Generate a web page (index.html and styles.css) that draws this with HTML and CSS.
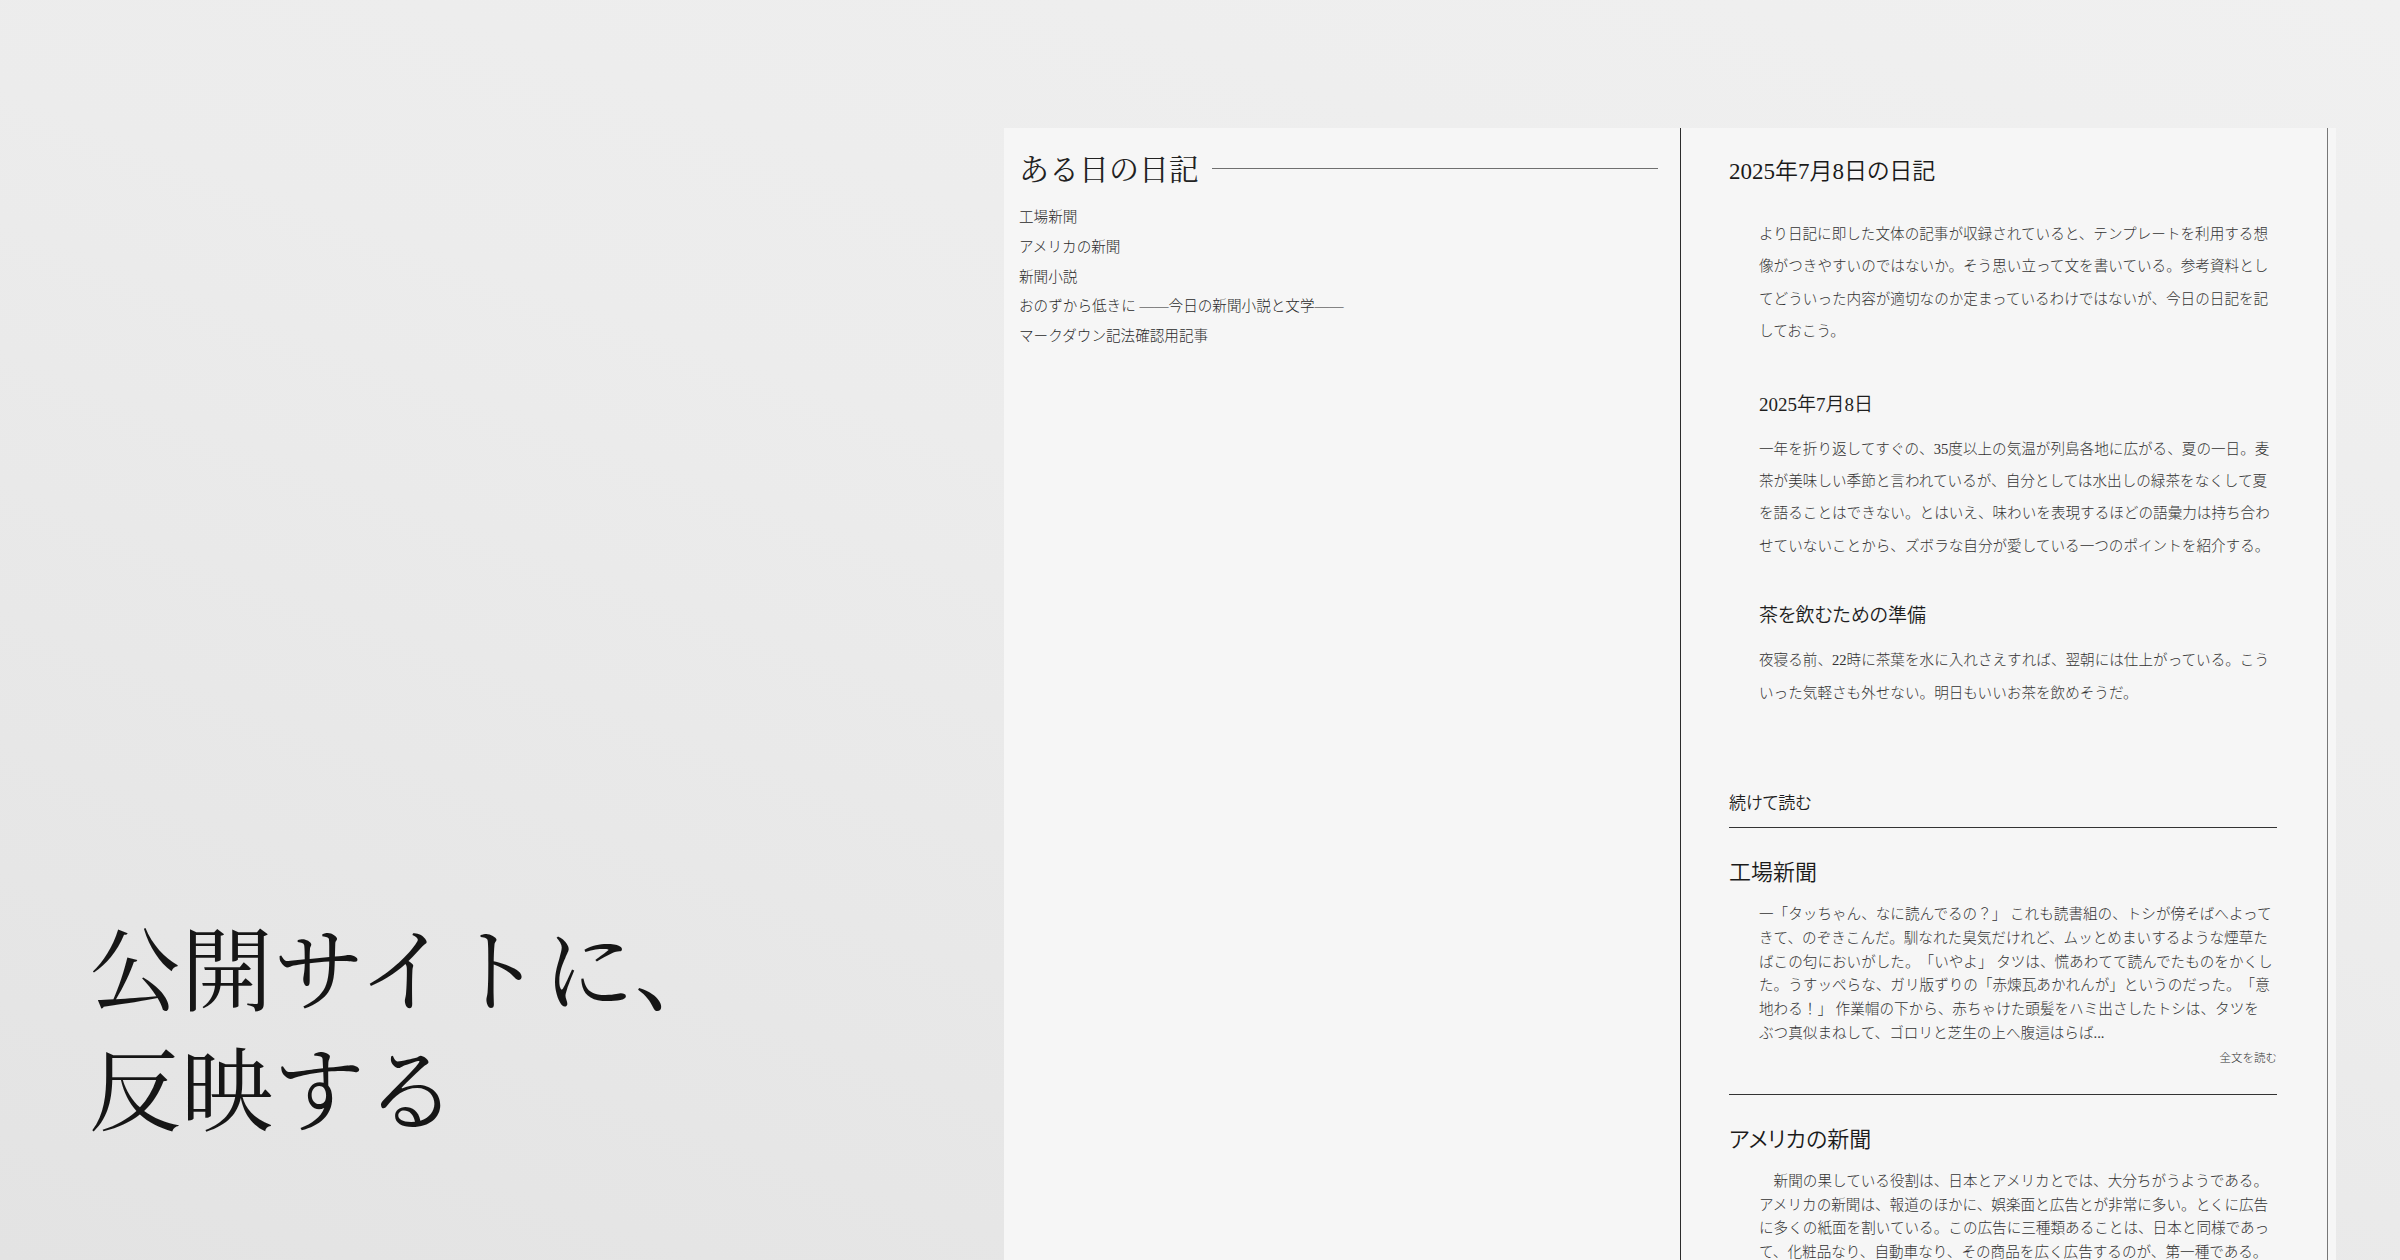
FILE: index.html
```html
<!DOCTYPE html>
<html lang="ja">
<head>
<meta charset="utf-8">
<title>公開サイトに、反映する</title>
<link rel="stylesheet" href="styles.css">
</head>
<body>
<div class="stage">
  <div class="hero">
    <p class="hero-text">公開サイトに、<br>反映する</p>
  </div>
  <div class="panel">
    <aside class="side">
      <div class="site-title">
        <span class="site-name">ある日の日記</span>
        <span class="site-rule"></span>
      </div>
      <ul class="nav">
        <li>工場新聞</li>
        <li>アメリカの新聞</li>
        <li>新聞小説</li>
        <li>おのずから低きに ――今日の新聞小説と文学――</li>
        <li>マークダウン記法確認用記事</li>
      </ul>
    </aside>
    <main class="main">
      <h1 class="entry-title">2025年7月8日の日記</h1>
      <div class="entry-body">
        <p class="para first">より日記に即した文体の記事が収録されていると、テンプレートを利用する想像がつきやすいのではないか。そう思い立って文を書いている。参考資料としてどういった内容が適切なのか定まっているわけではないが、今日の日記を記しておこう。</p>
        <h2 class="sub">2025年7月8日</h2>
        <p class="para">一年を折り返してすぐの、35度以上の気温が列島各地に広がる、夏の一日。麦茶が美味しい季節と言われているが、自分としては水出しの緑茶をなくして夏を語ることはできない。とはいえ、味わいを表現するほどの語彙力は持ち合わせていないことから、ズボラな自分が愛している一つのポイントを紹介する。</p>
        <h2 class="sub second">茶を飲むための準備</h2>
        <p class="para">夜寝る前、22時に茶葉を水に入れさえすれば、翌朝には仕上がっている。こういった気軽さも外せない。明日もいいお茶を飲めそうだ。</p>
      </div>
      <section class="more">
        <h3 class="more-title">続けて読む</h3>
        <article class="card">
          <h4 class="card-title">工場新聞</h4>
          <p class="card-text">一「タッちゃん、なに読んでるの？」 これも読書組の、トシが傍そばへよってきて、のぞきこんだ。馴なれた臭気だけれど、ムッとめまいするような煙草たばこの匂においがした。「いやよ」 タツは、慌あわてて読んでたものをかくした。うすッぺらな、ガリ版ずりの「赤煉瓦あかれんが」というのだった。「意地わる！」 作業帽の下から、赤ちゃけた頭髪をハミ出さしたトシは、タツを<span class="nw">ぶつ</span>真似まねして、ゴロリと芝生の上へ腹這はらば...</p>
          <div class="card-link">全文を読む</div>
        </article>
        <article class="card">
          <h4 class="card-title">アメリカの新聞</h4>
          <p class="card-text">　新聞の果している役割は、日本とアメリカとでは、大分ちがうようである。アメリカの新聞は、報道のほかに、娯楽面と広告とが非常に多い。とくに広告に多くの紙面を割いている。この広告に三種類あることは、日本と同様であって、化粧品なり、自動車なり、その商品を広く広告するのが、第一種である。</p>
        </article>
      </section>
    </main>
  </div>
</div>
</body>
</html>
```
FILE: styles.css
```css
html, body {
  margin: 0;
  padding: 0;
}
body {
  width: 2400px;
  height: 1260px;
  overflow: hidden;
  background: linear-gradient(200deg, #f0f0f0 0%, #ececec 45%, #e3e3e3 100%);
  font-family: "Liberation Serif", "Noto Sans CJK JP", sans-serif;
  font-weight: 300;
  color: #333;
  text-spacing-trim: space-all;
}
.stage {
  display: flex;
  height: 1260px;
  padding-top: 128px;
  box-sizing: border-box;
  overflow: hidden;
}
.hero {
  width: 1004px;
  flex: none;
  box-sizing: border-box;
  padding-left: 89px;
  padding-top: 776px;
}
.hero-text {
  margin: 0;
  font-family: "Noto Serif CJK JP", "Noto Serif JP", "Noto Sans CJK JP", serif;
  font-size: 92px;
  line-height: 120px;
  font-weight: 400;
  color: #161616;
  letter-spacing: 0;
}
.panel {
  display: flex;
  flex: none;
  width: 1332px;
  height: 1132px;
  background: #f6f6f6;
  padding-right: 8px;
  box-sizing: border-box;
  overflow: hidden;
}
.side {
  width: 677px;
  flex: none;
  box-sizing: border-box;
  padding: 18px 22px 0 15px;
  border-right: 1px solid #2b2b2b;
}
.site-title {
  display: flex;
  align-items: center;
  gap: 13px;
  height: 42px;
}
.site-name {
  font-family: "Noto Serif CJK JP", "Noto Serif JP", "Noto Sans CJK JP", serif;
  font-size: 30px;
  line-height: 42px;
  font-weight: 400;
  color: #222;
  white-space: nowrap;
}
.site-rule {
  flex: 1;
  height: 0;
  border-top: 1.5px solid #6f6f6f;
  margin-top: 2px;
}
.nav {
  list-style: none;
  margin: 15px 0 0;
  padding: 0;
}
.nav li {
  font-size: 14.6px;
  line-height: 29.75px;
  color: #2a2a2a;
  white-space: nowrap;
}
.main {
  width: 647px;
  flex: none;
  box-sizing: border-box;
  padding: 28px 50px 0 48px;
  border-right: 1.5px solid #777;
}
.entry-title {
  margin: 0;
  font-size: 23px;
  line-height: 32px;
  font-weight: 350;
  color: #1a1a1a;
  font-feature-settings: "palt";
}
.entry-body {
  padding-left: 30px;
}
.para {
  margin: 0;
  font-size: 14.6px;
  line-height: 32.4px;
  color: #333;
}
.para.first {
  margin-top: 30px;
}
.sub {
  margin: 42px 0 13px;
  font-size: 19px;
  line-height: 30px;
  font-weight: 350;
  color: #1e1e1e;
  font-feature-settings: "palt";
}
.sub.second {
  margin-top: 39px;
}
.sub + .para {
  margin-top: 12px;
}
.more {
  margin-top: 82px;
}
.more-title {
  margin: 0;
  font-size: 17px;
  line-height: 26px;
  font-weight: 350;
  color: #1e1e1e;
  padding-bottom: 10px;
  border-bottom: 1.5px solid #333;
  font-feature-settings: "palt";
}
.card {
  padding: 29px 0 28px;
  border-bottom: 1.5px solid #333;
}
.card:last-child {
  border-bottom: 0;
}
.card-title {
  margin: 0;
  font-size: 22px;
  line-height: 32px;
  font-weight: 350;
  color: #1a1a1a;
  font-feature-settings: "palt";
}
.card-text {
  margin: 14px 0 0;
  padding-left: 30px;
  font-size: 14.6px;
  line-height: 23.8px;
  color: #333;
}
.nw {
  white-space: nowrap;
}
.card-link {
  margin-top: 4px;
  text-align: right;
  font-size: 11.5px;
  line-height: 16px;
  color: #333;
}
```
